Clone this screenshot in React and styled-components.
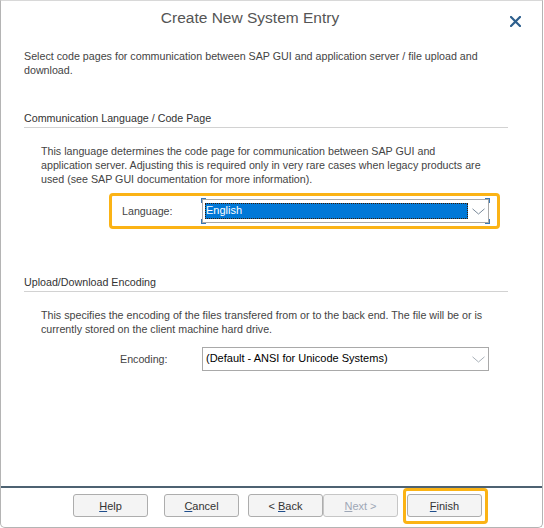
import React from "react";
import styled, { createGlobalStyle, css } from "styled-components";

const GlobalStyle = createGlobalStyle`
  html, body { margin: 0; padding: 0; background: #ffffff; }
  body { font-family: "Liberation Sans", Arial, sans-serif; }
  * { box-sizing: border-box; }
`;

const Window = styled.div`
  width: 543px;
  height: 528px;
  border: 1px solid #b4b4b4;
  border-top-color: #d8d8d8;
  border-radius: 0 0 5px 5px;
  background: #fff;
  display: flex;
  flex-direction: column;
  overflow: hidden;
`;

const TitleBar = styled.div`
  height: 34px;
  display: flex;
  align-items: center;
`;

const Title = styled.h1`
  flex: 1;
  margin: 0;
  text-align: center;
  font-weight: normal;
  font-size: 15.5px;
  color: #555555;
  padding-left: 6px;
  padding-bottom: 1px;
`;

const CloseButton = styled.button`
  width: 44px;
  height: 34px;
  border: none;
  background: transparent;
  padding: 6px 0 0 0;
  display: flex;
  align-items: center;
  justify-content: center;
  margin-right: 5px;
`;

const Content = styled.div`
  flex: 1;
  padding: 0 34px 0 23px;
  display: flex;
  flex-direction: column;
`;

const Text = styled.p`
  margin: 0;
  font-size: 10.7px;
  line-height: 14px;
  color: #444;
`;

const Intro = styled(Text)`
  margin-top: 14px;
  width: 470px;
`;

const SectionHeader = styled.div`
  margin-top: ${(p) => p.$top}px;
  font-size: 10.7px;
  line-height: 14px;
  color: #333;
  padding-bottom: 2px;
  border-bottom: 1px solid #d2d2d2;
`;

const SectionText = styled(Text)`
  margin-top: 16px;
  padding-left: 17px;
  width: 463px;
`;

const FieldRow = styled.div`
  margin-top: ${(p) => p.$top}px;
  margin-left: 85px;
  width: 391px;
  height: 36px;
  border: 3px solid ${(p) => (p.$highlight ? "#fbb315" : "transparent")};
  border-radius: 4px;
  display: flex;
  align-items: center;
  padding: 0 8px 0 ${(p) => p.$indent}px;
`;

const Label = styled.label`
  width: ${(p) => p.$width}px;
  font-size: 10.7px;
  color: #444;
`;

const Select = styled.div`
  position: relative;
  flex: 1;
  height: 24px;
  border: 1px solid #a9a9a9;
  background: #fff;
  display: flex;
  align-items: center;
  padding: 0 0 0 2px;
`;

const SelectValue = styled.div`
  flex: 1;
  height: 16px;
  font-size: 11px;
  line-height: 15px;
  padding-left: 1px;
  color: #000;
  ${(p) =>
    p.$selected &&
    css`
      background: #0078d7;
      color: #fff;
      outline: 1px dotted #3a1a00;
      outline-offset: -1px;
    `}
`;

const Chevron = styled.span`
  width: 20px;
  display: flex;
  justify-content: center;
`;

const Corner = styled.span`
  position: absolute;
  width: 5px;
  height: 5px;
  border-color: #3b77b2;
  border-style: solid;
  border-width: 0;
  ${(p) => p.$v === "t" ? css`top: -2px; border-top-width: 1px;` : css`bottom: -2px; border-bottom-width: 1px;`}
  ${(p) => p.$h === "l" ? css`left: -2px; border-left-width: 1px;` : css`right: -2px; border-right-width: 1px;`}
`;

const Footer = styled.div`
  height: 41px;
  border-top: 2px solid #4d6272;
  display: flex;
  align-items: flex-start;
  padding: 0 0 0 72px;
`;

const ButtonFrame = styled.div`
  margin-left: ${(p) => p.$gap || 0}px;
  margin-top: ${(p) => (p.$highlight ? 0 : 6)}px;
  ${(p) =>
    p.$highlight &&
    css`
      border: 3px solid #fbb315;
      border-radius: 4px;
      padding: 3px 3px 4px 1px;
    `}
`;

const Button = styled.button`
  width: 75px;
  height: 23px;
  border: 1px solid ${(p) => (p.disabled ? "#c6c6c6" : "#adadad")};
  border-radius: 3px;
  background: #f4f4f4;
  font-family: "Liberation Sans", Arial, sans-serif;
  font-size: 11px;
  color: ${(p) => (p.disabled ? "#9ea7b6" : "#333")};
  padding: 0;
  u { text-decoration-color: ${(p) => (p.disabled ? "#9ea7b6" : "#1f4e8c")}; }
`;

function ChevronIcon({ color }) {
  return (
    <svg width="13" height="7" viewBox="0 0 13 7">
      <path d="M0.5 0.8 L6.5 6 L12.5 0.8" fill="none" stroke={color} strokeWidth="1" />
    </svg>
  );
}

export default function App() {
  return (
    <>
      <GlobalStyle />
      <Window>
        <TitleBar>
          <Title>Create New System Entry</Title>
          <CloseButton aria-label="Close">
            <svg width="11" height="11" viewBox="0 0 11 11">
              <path d="M1 1 L10 10 M10 1 L1 10" stroke="#2d5f8d" strokeWidth="2.2" strokeLinecap="square" />
            </svg>
          </CloseButton>
        </TitleBar>
        <Content>
          <Intro>
            Select code pages for communication between SAP GUI and application server / file upload and download.
          </Intro>

          <SectionHeader $top={34}>Communication Language / Code Page</SectionHeader>
          <SectionText>
            This language determines the code page for communication between SAP GUI and application server. Adjusting this is required only in very rare cases when legacy products are used (see SAP GUI documentation for more information).
          </SectionText>
          <FieldRow $top={7} $indent={10} $highlight>
            <Label $width={80}>Language:</Label>
            <Select>
              <SelectValue $selected>English</SelectValue>
              <Chevron><ChevronIcon color="#7a8a9a" /></Chevron>
              <Corner $v="t" $h="l" />
              <Corner $v="t" $h="r" />
              <Corner $v="b" $h="l" />
              <Corner $v="b" $h="r" />
            </Select>
          </FieldRow>

          <SectionHeader $top={46}>Upload/Download Encoding</SectionHeader>
          <SectionText>
            This specifies the encoding of the files transfered from or to the back end. The file will be or is currently stored on the client machine hard drive.
          </SectionText>
          <FieldRow $top={5} $indent={8}>
            <Label $width={82}>Encoding:</Label>
            <Select>
              <SelectValue>(Default - ANSI for Unicode Systems)</SelectValue>
              <Chevron><ChevronIcon color="#a8b0b8" /></Chevron>
            </Select>
          </FieldRow>
        </Content>
        <Footer>
          <ButtonFrame><Button><u>H</u>elp</Button></ButtonFrame>
          <ButtonFrame $gap={16}><Button><u>C</u>ancel</Button></ButtonFrame>
          <ButtonFrame $gap={9}><Button>&lt; <u>B</u>ack</Button></ButtonFrame>
          <ButtonFrame><Button disabled><u>N</u>ext &gt;</Button></ButtonFrame>
          <ButtonFrame $gap={5} $highlight><Button><u>F</u>inish</Button></ButtonFrame>
        </Footer>
      </Window>
    </>
  );
}
